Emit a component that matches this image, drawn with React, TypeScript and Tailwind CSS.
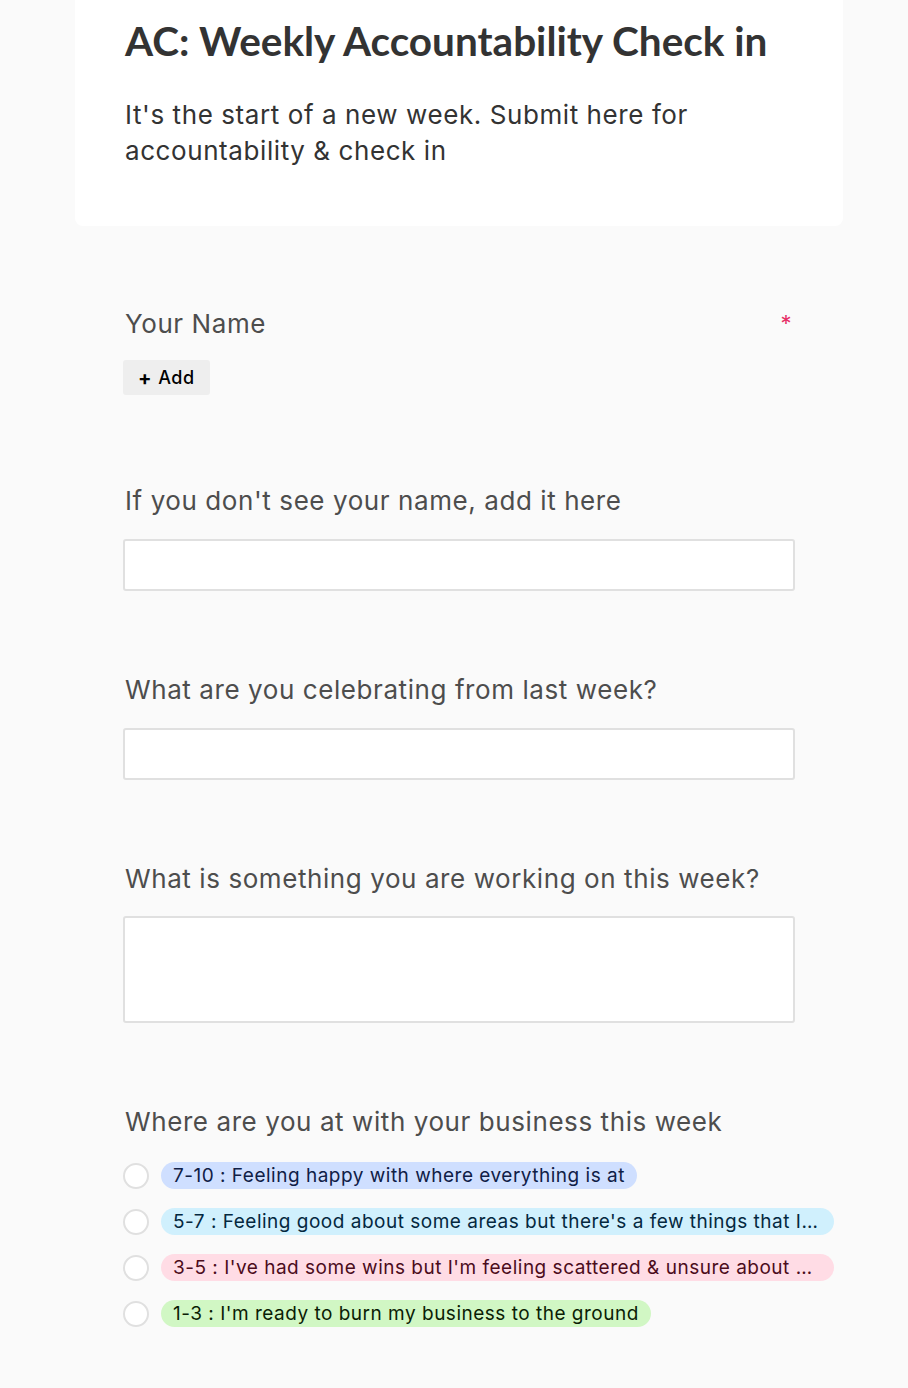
export default function App() {
  const options = [
    { text: "7-10 : Feeling happy with where everything is at", bg: "bg-[#cfdfff]", fg: "text-[#102046]" },
    { text: "5-7 : Feeling good about some areas but there's a few things that I need to work on", bg: "bg-[#d0f0fd]", fg: "text-[#04283f]" },
    { text: "3-5 : I've had some wins but I'm feeling scattered & unsure about a lot of things", bg: "bg-[#ffdce5]", fg: "text-[#4c0c1c]" },
    { text: "1-3 : I'm ready to burn my business to the ground", bg: "bg-[#d1f7c4]", fg: "text-[#0b1d05]" },
  ]

  return (
    <div className="min-h-screen bg-[#fafafa] font-['Inter',sans-serif]">
      <div className="ml-[75px] w-[768px]">
        <div className="bg-white rounded-b-lg px-[50px] pt-[14px] pb-[57px]">
          <h1 className="font-['Lato',sans-serif] text-[40.5px] leading-[54px] font-bold text-[#333]">AC: Weekly Accountability Check in</h1>
          <p className="mt-[29px] text-[26px] leading-[36px] tracking-[0.58px] text-[#333]">
            It's the start of a new week. Submit here for accountability &amp; check in
          </p>
        </div>

        <div className="pl-[50px] pr-[48px] pt-[82px] pb-[60px] tracking-[0.58px]">
          <div>
            <div className="flex justify-between">
              <label className="text-[26px] leading-[32px] text-[#4d4d4d]">Your Name</label>
              <span className="mt-[3px] text-[22px] leading-[24px] text-[#e62e66] mr-[3px]">*</span>
            </div>
            <button className="mt-[20px] -ml-[2px] h-[35px] px-[15px] rounded-[3px] bg-[#eeeeee] text-[18px] font-medium text-black flex items-center gap-[6px]">
              <span className="text-[20px] font-bold">+</span>
              <span>Add</span>
            </button>
          </div>

          <div className="mt-[90px]">
            <label className="block text-[26px] leading-[32px] text-[#4d4d4d]">If you don't see your name, add it here</label>
            <div className="mt-[22px] -ml-[2px] h-[52px] rounded-[3px] border-2 border-[#e0e0e0] bg-white" />
          </div>

          <div className="mt-[83px]">
            <label className="block text-[26px] leading-[32px] text-[#4d4d4d]">What are you celebrating from last week?</label>
            <div className="mt-[22px] -ml-[2px] h-[52px] rounded-[3px] border-2 border-[#e0e0e0] bg-white" />
          </div>

          <div className="mt-[83px]">
            <label className="block text-[26px] leading-[32px] text-[#4d4d4d]">What is something you are working on this week?</label>
            <div className="mt-[21px] -ml-[2px] h-[107px] rounded-[3px] border-2 border-[#e0e0e0] bg-white" />
          </div>

          <div className="mt-[83px]">
            <label className="block text-[26px] leading-[32px] text-[#4d4d4d]">Where are you at with your business this week</label>
            <div className="mt-[24px] flex flex-col gap-[19px] -ml-[2px] w-[711px]">
              {options.map((o) => (
                <div key={o.text} className="flex items-center h-[27px] min-w-0">
                  <span className="shrink-0 w-[26px] h-[26px] rounded-full border-2 border-[#e0e0e0] bg-white" />
                  <span className={`ml-[12px] min-w-0 truncate rounded-full px-[12px] h-[27px] leading-[27px] text-[19px] tracking-[0.5px] ${o.bg} ${o.fg}`}>
                    {o.text}
                  </span>
                </div>
              ))}
            </div>
          </div>
        </div>
      </div>
    </div>
  )
}
